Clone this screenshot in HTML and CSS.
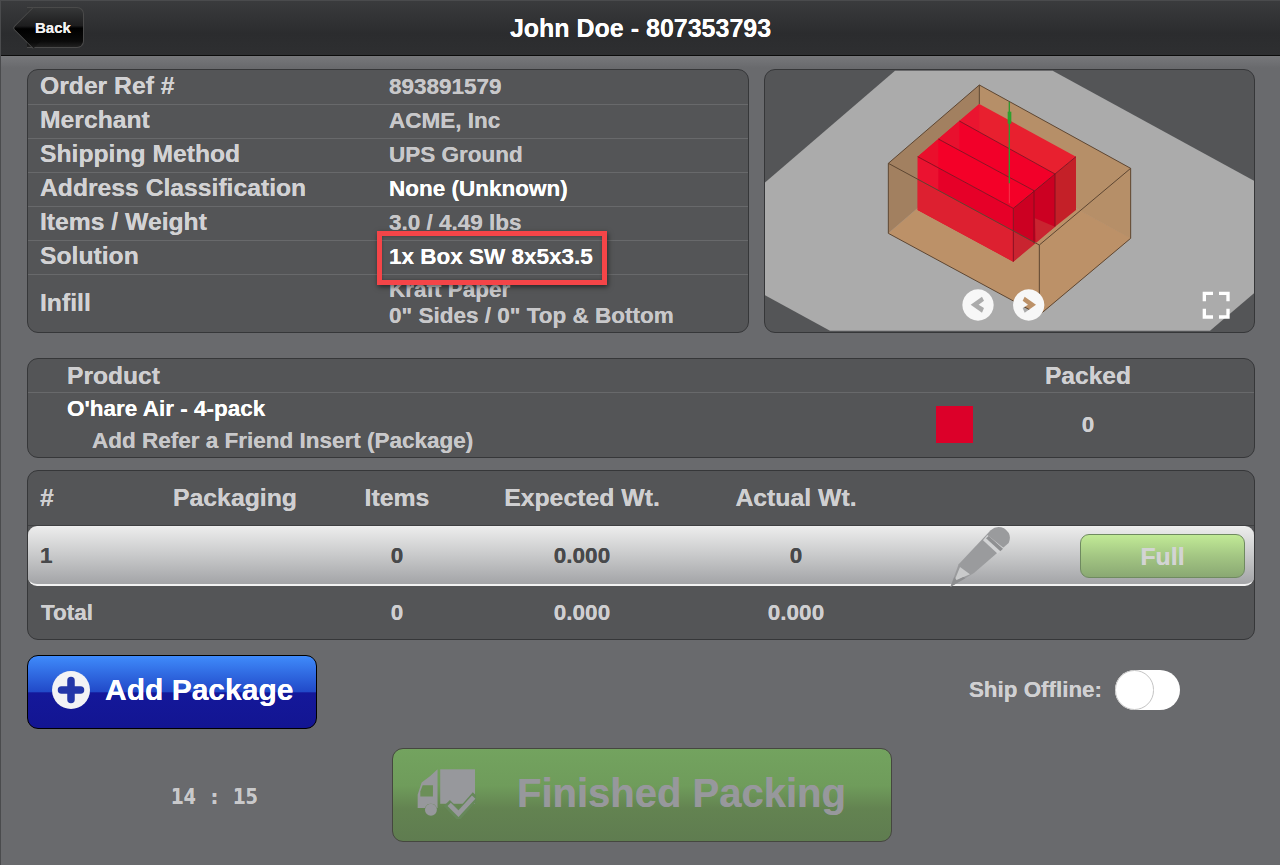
FILE: index.html
```html
<!DOCTYPE html>
<html lang="en">
<head>
<meta charset="utf-8">
<title>John Doe - 807353793</title>
<link rel="stylesheet" href="styles.css">
</head>
<body>
<header class="topbar">
  <a class="back"><span class="back-label">Back</span></a>
  <h1 class="title">John Doe - 807353793</h1>
</header>
<main class="page">
  <section class="top-row">
    <div class="panel info">
      <div class="info-row"><span class="info-label">Order Ref #</span><span class="info-value">893891579</span></div>
      <div class="info-row"><span class="info-label">Merchant</span><span class="info-value">ACME, Inc</span></div>
      <div class="info-row"><span class="info-label">Shipping Method</span><span class="info-value">UPS Ground</span></div>
      <div class="info-row"><span class="info-label">Address Classification</span><span class="info-value bright">None (Unknown)</span></div>
      <div class="info-row"><span class="info-label">Items / Weight</span><span class="info-value">3.0 / 4.49 lbs</span></div>
      <div class="info-row"><span class="info-label">Solution</span><span class="info-value bright">1x Box SW 8x5x3.5</span></div>
      <div class="info-row tall"><span class="info-label">Infill</span><span class="info-value">Kraft Paper<br>0" Sides / 0" Top &amp; Bottom</span></div>
      <div class="callout"></div>
    </div>
    <div class="panel viewer">
      <svg class="scene" viewBox="15 30 1467 786" aria-hidden="true">
        <defs><filter id="soft" x="-10%" y="-10%" width="120%" height="120%"><feGaussianBlur stdDeviation="2"/></filter></defs>
        <polygon fill="#ababab" points="405,32 878,32 1482,362 1482,700 1350,812 210,812 14,705 14,368"/>
        <polygon fill="#bc9168" points="385,520 658,285 1112,535 838,765"/>
        <polygon fill="#a28060" points="385,310 658,75 658,285 385,520"/>
        <polygon fill="#b68f68" points="658,75 1112,325 1112,535 658,285"/>
        <polygon fill="#e8202f" points="658,132 948,290 885,342 598,183"/>
        <polygon fill="#f20029" points="598,183 885,342 822,392 535,237"/>
        <polygon fill="#f40028" points="535,237 822,392 760,445 473,290"/>
        <polygon fill="#e60028" points="473,290 760,445 760,605 473,450"/>
        <polygon fill="#ea0f2c" points="473,290 535,237 535,324"/>
        <polygon fill="#ee2036" opacity="0.55" points="473,290 535,324 535,391 473,358"/>
        <polygon fill="#ea1530" points="598,183 658,132 658,216 598,183"/>
        <polygon fill="#e8102e" points="598,183 598,271 535,237"/>
        <polygon fill="#cc0022" points="760,445 822,392 822,550 760,605"/>
        <polygon fill="#cc0022" points="822,392 885,342 885,500 822,550"/>
        <polygon fill="#c42028" points="885,342 948,290 948,450 885,500"/>
        <polygon fill="#dd2030" points="473,358 760,513 760,605 473,450"/>
        <polygon fill="#c92430" points="760,513 827,550 760,605"/>
        <polygon fill="#c92430" points="825,475 885,500 827,550"/>
        <path d="M473 290L760 445L760 605M760 445L948 290M598 183L885 342L885 500M535 237L822 392L822 550" fill="none" stroke="#7a1020" stroke-width="2.5"/>
        <polygon fill="#bc9168" points="1112,535 960,452 838,555 838,765"/>
        <polygon fill="#b68f68" points="1112,325 1112,535 962,452"/>
        <path d="M748 125V370" stroke="#2f9a2f" stroke-width="4" fill="none"/>
        <path d="M748 370V430" stroke="#f6525f" stroke-width="2" fill="none"/>
        <rect x="743" y="155" width="11" height="36" fill="#2ea02e"/>
        <path d="M658 75L1112 325L1112 535L838 765L385 520L385 310ZM385 310L838 555L1112 325M838 555V765M658 75V132" fill="none" stroke="#5d4632" stroke-width="3"/>
        <path filter="url(#soft)" fill="#f7f7f7" fill-rule="evenodd" d="M654 688a47 47 0 1 0 .1 0ZM666 710L632 734L666 758L672 744L656 734L672 722Z"/>
        <path filter="url(#soft)" fill="#f7f7f7" fill-rule="evenodd" d="M806 688a47 47 0 1 0 .1 0ZM794 710L828 734L794 758L788 744L804 734L788 722Z"/>
        <path d="M1333 724V700H1359M1377 700H1404V724M1404 746V771H1377M1359 771H1333V746" fill="none" stroke="#fff" stroke-width="10"/>
      </svg>
    </div>
  </section>

  <section class="panel products">
    <div class="product-head"><span class="product-name">Product</span><span class="packed">Packed</span></div>
    <div class="product-row">
      <div class="product-text">
        <div class="bright">O'hare Air - 4-pack</div>
        <div class="insert">Add Refer a Friend Insert (Package)</div>
      </div>
      <span class="swatch"></span>
      <span class="packed">0</span>
    </div>
  </section>

  <section class="panel packages">
    <div class="pk-row pk-head">
      <span class="pk-first">#</span><span>Packaging</span><span>Items</span><span>Expected Wt.</span><span>Actual Wt.</span><span></span><span></span>
    </div>
    <div class="pk-row pk-item">
      <span class="pk-first">1</span><span></span><span>0</span><span>0.000</span><span>0</span>
      <span class="pk-icon">
        <svg class="pencil" viewBox="150 48 183 180" aria-hidden="true">
          <path d="M151 228L176 160L272 58Q290 42 312 52Q338 70 326 96L222 186Z" fill="#9a9b9d"/>
          <path d="M249 88L262 72L312 112L293 128Z" fill="#d2d3d4"/>
          <path d="M258 82L266 75L309 113L301 121Z" fill="#8f9092"/>
          <path d="M163 210L180 168L210 190Z" fill="#c9cacb"/>
          <path d="M151 228L163 198L170 208L190 198L196 202Z" fill="#8d8e90"/>
        </svg>
      </span>
      <span class="pk-action"><span class="full">Full</span></span>
    </div>
    <div class="pk-row pk-total">
      <span class="pk-first">Total</span><span></span><span>0</span><span>0.000</span><span>0.000</span><span></span><span></span>
    </div>
  </section>

  <section class="actions">
    <button class="add-package">
      <svg class="add-icon" viewBox="0 0 38 38" aria-hidden="true">
        <circle cx="19" cy="19" r="19" fill="#f3f3f5"/>
        <path d="M19 9.5V28.5M9.5 19H28.5" stroke="#2437a8" stroke-width="7.5" stroke-linecap="round"/>
      </svg>
      <span>Add Package</span>
    </button>
    <div class="offline">
      <span class="offline-label">Ship Offline:</span>
      <span class="toggle"><span class="knob"></span></span>
    </div>
  </section>

  <section class="footer-row">
    <div class="timer">14 : 15</div>
    <button class="finish">
      <svg class="truck" viewBox="110 85 178 152" aria-hidden="true">
        <rect x="180" y="88" width="105" height="104" fill="#97989c"/>
        <path d="M172 88V205H170A19 19 0 0 0 134 205H112V165L124 128L150 108Z" fill="#97989c"/>
        <path d="M127 136H158V170H120V155Z" fill="#6b8f58"/>
        <circle cx="152" cy="210" r="18" fill="#97989c"/>
        <path d="M200 190L235 226L288 166" fill="none" stroke="#66885a" stroke-width="26"/>
        <path d="M207 194L235 222L281 172" fill="none" stroke="#97989c" stroke-width="14"/>
      </svg>
      <span>Finished Packing</span>
    </button>
  </section>
</main>
</body>
</html>
```

FILE: styles.css
```css
* { box-sizing: border-box; }
html, body { margin: 0; height: 100%; }
body {
  width: 1280px;
  height: 865px;
  overflow: hidden;
  font-family: "Liberation Sans", Arial, sans-serif;
  font-weight: bold;
  color: #cfcfd1;
  background: #696a6d;
  border-left: 1px solid #4a4b4d;
  text-shadow: 0 0 0.5px currentColor;
}
.topbar {
  display: flex;
  align-items: center;
  justify-content: center;
  position: relative;
  height: 56px;
  background: linear-gradient(#3a3b3d, #2b2c2e 60%, #2e2f31);
  border-top: 1px solid #4a4b4d;
  border-bottom: 1px solid #0c0c0c;
}
.title {
  margin: 0;
  font-size: 25px;
  line-height: 1;
  color: #fff;
}
.back {
  position: absolute;
  left: 26px;
  top: 6px;
  width: 57px;
  height: 41px;
  border: 1px solid #4a4a4a;
  border-left: 0;
  border-radius: 0 7px 7px 0;
  background: linear-gradient(#363738, #1d1d1e 45%, #000 52%, #0a0a0a 85%, #202020);
}
.back::before {
  content: "";
  position: absolute;
  left: -9px;
  top: 5px;
  width: 29px;
  height: 29px;
  transform: rotate(45deg);
  border-left: 1px solid #4a4a4a;
  border-bottom: 1px solid #4a4a4a;
  border-radius: 0 0 0 4px;
  background: linear-gradient(135deg, #363738 0, #1d1d1e 45%, #000 52%, #0a0a0a 85%, #202020);
}
.back-label {
  position: absolute;
  left: 8px;
  top: 11px;
  font-size: 15px;
  line-height: 18px;
  color: #f2f2f2;
}
.page {
  padding: 13px 25px 0 26px;
  background: linear-gradient(#77787b 0, #696a6d 12px);
}
.panel {
  background: #545557;
  border: 1px solid #363739;
  border-radius: 11px;
}
.top-row {
  display: flex;
  gap: 15px;
  height: 264px;
}
.info {
  position: relative;
  width: 722px;
  padding-top: 1px;
}
.info-row {
  display: grid;
  grid-template-columns: 349px 1fr;
  align-items: center;
  height: 34px;
  padding: 0 0 2px 12px;
  border-bottom: 1px solid #68696b;
}
.info-row.tall {
  height: 56px;
  padding-bottom: 0;
  border-bottom: 0;
}
.info-label {
  margin-bottom: 1px;
  font-size: 24.7px;
  color: #d2d2d4;
}
.info-value {
  font-size: 22.5px;
  line-height: 26px;
  color: #c8c8ca;
}
.bright { color: #fff; }
.callout {
  position: absolute;
  left: 349px;
  top: 161px;
  width: 230px;
  height: 54px;
  border: 5px solid #f44548;
  box-shadow: 1px 2px 5px rgba(0, 0, 0, 0.55), inset 0 0 3px rgba(0, 0, 0, 0.3);
}
.viewer {
  flex: 1;
  overflow: hidden;
}
.scene {
  display: block;
  width: 100%;
  height: 100%;
}
.products {
  margin-top: 25px;
  height: 100px;
  font-size: 22.5px;
}
.product-head {
  display: flex;
  align-items: center;
  height: 34px;
  border-bottom: 1px solid #68696b;
  padding-left: 39px;
  font-size: 24.6px;
}
.product-name { width: 921px; }
.packed {
  width: 200px;
  text-align: center;
  color: #d0d0d2;
}
.product-row {
  display: flex;
  align-items: center;
  height: 64px;
  padding-left: 39px;
}
.product-row .packed { margin-bottom: 1px; }
.product-text {
  width: 869px;
  line-height: 32px;
}
.insert {
  padding-left: 25px;
  color: #c8c8ca;
}
.swatch {
  width: 37px;
  height: 37px;
  margin: 0 15px 2px 0;
  background: #dc0029;
}
.packages {
  margin-top: 12px;
  height: 170px;
  font-size: 22.5px;
}
.pk-row {
  display: grid;
  grid-template-columns: 140px 134px 190px 180px 248px 140px 194px;
  align-items: center;
  text-align: center;
}
.pk-first {
  text-align: left;
  padding-left: 12px;
}
.pk-head {
  height: 55px;
  font-size: 24.8px;
  border-bottom: 1px solid #3f4042;
}
.pk-item {
  height: 60px;
  padding-bottom: 1px;
  color: #48494b;
  background: linear-gradient(#ececec, #c8c9ca 50%, #a3a4a7);
  border-top: 1px solid #efefef;
  border-bottom: 2px solid #f2f2f2;
  border-radius: 9px;
}
.pk-total {
  height: 53px;
  color: #cfcfd1;
}
.pk-total .pk-first { padding-left: 13px; }
.pk-icon {
  display: flex;
  height: 58px;
  padding-left: 30px;
}
.pencil {
  width: 61px;
  height: 60px;
}
.pk-action { display: flex; padding-left: 20px; }
.full {
  width: 165px;
  height: 44px;
  line-height: 44px;
  font-size: 24.8px;
  text-align: center;
  color: #d3d4d3;
  background: linear-gradient(#c1ea96, #a3c683 50%, #8aa873);
  border: 1px solid #6f8a60;
  border-radius: 9px;
}
.actions {
  display: flex;
  justify-content: space-between;
  align-items: center;
  margin-top: 15px;
  height: 74px;
}
.add-package {
  display: flex;
  align-items: center;
  gap: 15px;
  width: 290px;
  height: 74px;
  padding: 0 0 4px 24px;
  font: bold 30px "Liberation Sans", Arial, sans-serif;
  color: #fff;
  text-shadow: 0 0 0.5px currentColor;
  background: linear-gradient(#3f8bfb, #2149c8 50%, #14189a 51%, #131592);
  border: 1px solid #000;
  border-radius: 11px;
}
.add-icon {
  width: 38px;
  height: 38px;
  flex: none;
}
.offline {
  display: flex;
  align-items: center;
  gap: 13px;
  margin: 0 75px 4px 0;
}
.offline-label {
  font-size: 22.4px;
  color: #d0d0d2;
}
.toggle {
  display: block;
  width: 65px;
  height: 40px;
  background: #fff;
  border-radius: 20px;
}
.knob {
  display: block;
  width: 39px;
  height: 40px;
  background: #fff;
  border: 1px solid #c4c4c4;
  border-radius: 20px;
}
.footer-row {
  display: flex;
  align-items: center;
  margin-top: 19px;
  height: 94px;
}
.timer {
  width: 365px;
  padding: 4px 0 0 144px;
  font: bold 20.6px "DejaVu Sans Mono", monospace;
  color: #c9c9cb;
}
.finish {
  display: flex;
  align-items: center;
  gap: 41px;
  width: 500px;
  height: 94px;
  padding: 0 0 4px 24px;
  font: bold 40px "Liberation Sans", Arial, sans-serif;
  color: #97989c;
  text-shadow: 0 0 0.5px currentColor;
  background: linear-gradient(#73a35f, #6f9c5b 40%, #638351 65%, #5f7c50);
  border: 1px solid #45473f;
  border-radius: 11px;
}
.truck {
  width: 59px;
  height: 51px;
  flex: none;
}
```
